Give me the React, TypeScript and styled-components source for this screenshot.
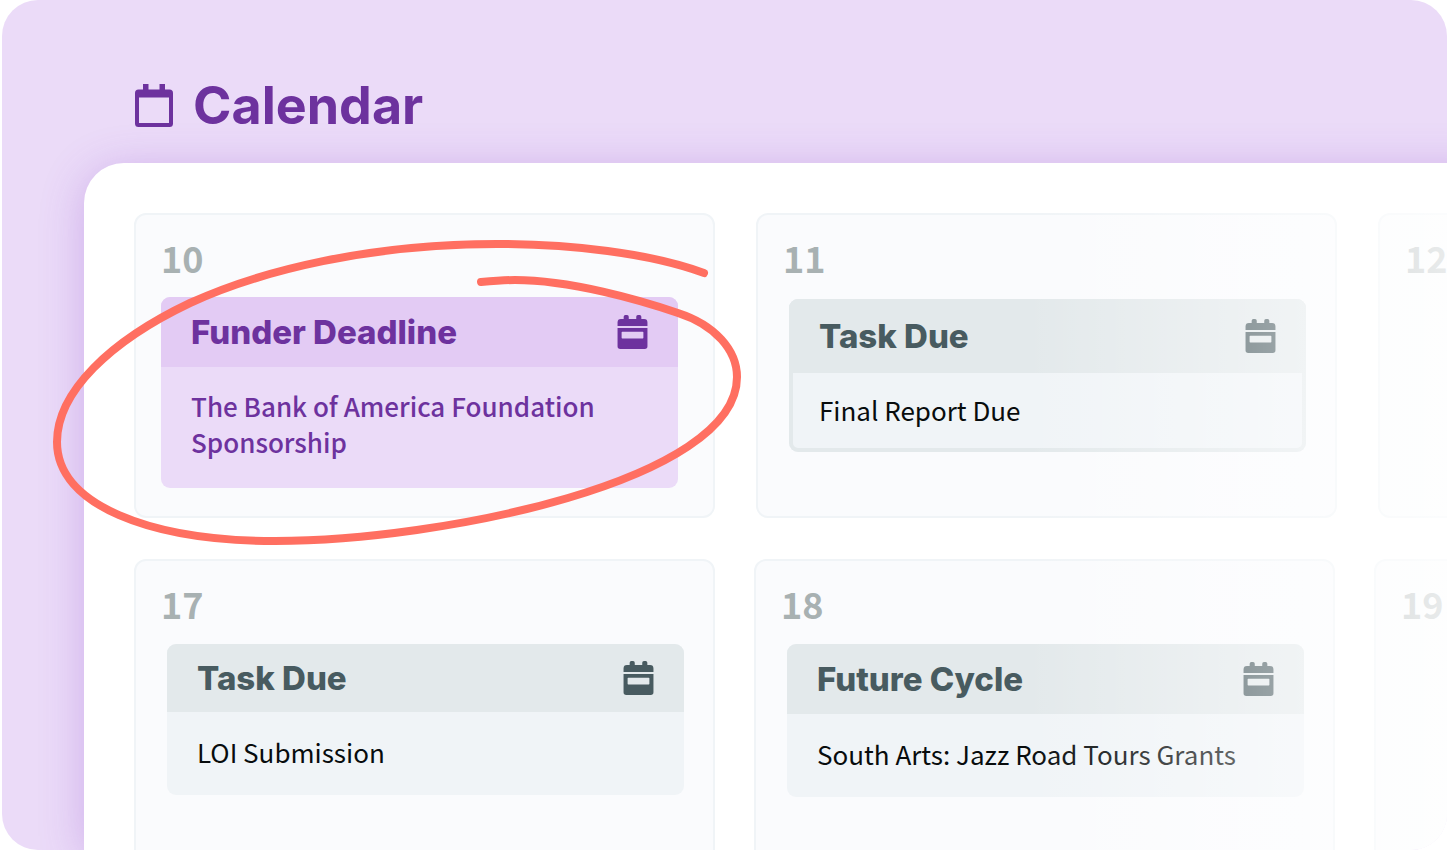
import React from "react";
import styled, { createGlobalStyle } from "styled-components";

const GlobalStyle = createGlobalStyle`
  * { box-sizing: border-box; }
  body {
    margin: 0;
    background: #ffffff;
    font-family: "Noto Sans CJK JP", "Noto Sans", sans-serif;
  }
  h1, h2, h3, p { margin: 0; }
`;

const Frame = styled.main`
  position: relative;
  display: flex;
  flex-direction: column;
  height: 100vh;
  margin: 0 3px 0 2px;
  border-radius: 36px;
  overflow: hidden;
  background: #ebdbf8;
`;

const Header = styled.header`
  display: flex;
  align-items: center;
  gap: 20px;
  flex: none;
  height: 163px;
  padding: 48px 0 0 133px;
  color: #6d329e;
`;

const PageTitle = styled.h1`
  font: 700 52px/64px Inter, sans-serif;
`;

const Panel = styled.section`
  position: relative;
  flex: 1;
  min-height: 0;
  display: flex;
  flex-direction: column;
  gap: 41px;
  margin: 0 -50px 0 82px;
  padding: 50px 50px 0 50px;
  border-top-left-radius: 40px;
  background: #ffffff;
  box-shadow: 0 6px 44px rgba(140, 70, 205, 0.3);

  &::after {
    content: "";
    position: absolute;
    inset: 0 50px 0 0;
    border-top-left-radius: 40px;
    background: linear-gradient(
      to right,
      rgba(255, 255, 255, 0) 69%,
      rgba(255, 255, 255, 0.74) 100%
    );
    pointer-events: none;
  }
`;

const Week = styled.div<{ $gap: number }>`
  display: flex;
  flex: none;
  gap: ${(p) => p.$gap}px;
  overflow: hidden;
`;

const Day = styled.article`
  flex: none;
  width: 44.25%;
  min-height: 305px;
  padding: 20px 29px 28px 25px;
  border: 2px solid #f0f4f7;
  border-radius: 12px;
  background: #fafbfd;
`;

const DayNumber = styled.h2`
  font-size: 36px;
  font-weight: 700;
  line-height: 44px;
  color: #a8b1b2;
`;

type Tone = "purple" | "slate";

const Card = styled.div<{ $tone: Tone; $outlined?: boolean }>`
  margin: ${(p) =>
    p.$tone === "purple" ? "18px 6px 0 0" : p.$outlined ? "20px 0 0 6px" : "19px 0 0 6px"};
  border-radius: 9px;
  overflow: hidden;
  color: ${(p) => (p.$tone === "purple" ? "#6d329e" : "#485b60")};
  background: ${(p) => (p.$tone === "purple" ? "#ebdbf8" : "#f0f4f7")};
  box-shadow: ${(p) => (p.$outlined ? "inset 0 0 0 4px #e3e9eb" : "none")};
`;

const CardHeader = styled.div<{ $tone: Tone; $height: number }>`
  display: flex;
  align-items: center;
  justify-content: space-between;
  height: ${(p) => p.$height}px;
  padding: 0 30px;
  background: ${(p) => (p.$tone === "purple" ? "#e3cbf4" : "#e3e9eb")};
`;

const CardTitle = styled.h3`
  font: 800 33px/40px Inter, sans-serif;
`;

const CardText = styled.p<{ $tone: Tone; $outlined?: boolean }>`
  padding: ${(p) =>
    p.$tone === "purple"
      ? "21px 30px 28px"
      : p.$outlined
        ? "19px 30px 24px"
        : "22px 30px 25px"};
  font-size: 26px;
  font-weight: ${(p) => (p.$tone === "purple" ? 500 : 400)};
  line-height: 36px;
  color: ${(p) => (p.$tone === "purple" ? "#6d329e" : "#080c0d")};
`;

const Annotation = styled.svg`
  position: absolute;
  top: 0;
  left: -2px;
  pointer-events: none;
`;

const CalendarOutline = () => (
  <svg width="38" height="43" viewBox="0 0 38 43" fill="currentColor" aria-hidden="true">
    <path
      fillRule="evenodd"
      d="M8 0h5.500v5.500h11V0H30v5.500h4.500A3.500 3.500 0 0 1 38 9v30.500a3.500 3.500 0 0 1-3.500 3.500h-31A3.500 3.500 0 0 1 0 39.500V9a3.500 3.500 0 0 1 3.500-3.500H8zM4 13.500V39h30V13.500z"
    />
  </svg>
);

const CalendarSolid = () => (
  <svg width="31" height="34" viewBox="0 0 88 100" fill="currentColor" aria-hidden="true">
    <path d="M18 12V5a5 5 0 0 1 5-5h5a5 5 0 0 1 5 5v7h22V5a5 5 0 0 1 5-5h5a5 5 0 0 1 5 5v7h8a10 10 0 0 1 10 10v10H0V22a10 10 0 0 1 10-10z" />
    <path
      fillRule="evenodd"
      d="M0 38h88v54a8 8 0 0 1-8 8H8a8 8 0 0 1-8-8zM14 49a2 2 0 0 0-2 2v16a2 2 0 0 0 2 2h60a2 2 0 0 0 2-2V51a2 2 0 0 0-2-2z"
    />
  </svg>
);

interface Entry {
  title: string;
  text: string;
  tone: Tone;
  headerHeight: number;
  outlined?: boolean;
}

interface DayData {
  day: number;
  entry?: Entry;
}

const weeks: { gap: number; days: DayData[] }[] = [
  {
    gap: 41,
    days: [
      {
        day: 10,
        entry: {
          title: "Funder Deadline",
          text: "The Bank of America Foundation Sponsorship",
          tone: "purple",
          headerHeight: 70,
        },
      },
      {
        day: 11,
        entry: {
          title: "Task Due",
          text: "Final Report Due",
          tone: "slate",
          headerHeight: 74,
          outlined: true,
        },
      },
      { day: 12 },
    ],
  },
  {
    gap: 39,
    days: [
      {
        day: 17,
        entry: { title: "Task Due", text: "LOI Submission", tone: "slate", headerHeight: 68 },
      },
      {
        day: 18,
        entry: {
          title: "Future Cycle",
          text: "South Arts: Jazz Road Tours Grants",
          tone: "slate",
          headerHeight: 70,
        },
      },
      { day: 19 },
    ],
  },
];

const EventCard = ({ entry }: { entry: Entry }) => (
  <Card $tone={entry.tone} $outlined={entry.outlined}>
    <CardHeader $tone={entry.tone} $height={entry.headerHeight}>
      <CardTitle>{entry.title}</CardTitle>
      <CalendarSolid />
    </CardHeader>
    <CardText $tone={entry.tone} $outlined={entry.outlined}>
      {entry.text}
    </CardText>
  </Card>
);

export default function App() {
  return (
    <>
      <GlobalStyle />
      <Frame>
        <Header>
          <CalendarOutline />
          <PageTitle>Calendar</PageTitle>
        </Header>
        <Panel>
          {weeks.map((week) => (
            <Week key={week.gap} $gap={week.gap}>
              {week.days.map(({ day, entry }) => (
                <Day key={day}>
                  <DayNumber>{day}</DayNumber>
                  {entry && <EventCard entry={entry} />}
                </Day>
              ))}
            </Week>
          ))}
        </Panel>
        <Annotation width="800" height="600" viewBox="0 0 800 600" fill="none" aria-hidden="true">
          <path
            d="M704 273C650 253 570 244 497 244C370 244 262 270 190 303C110 341 57 392 57 442C57 505 150 541 275 541C440 541 737 481 737 377C737 350 715 325 678 313C640 300 570 280 515 280C503 280 492 281 481 282"
            stroke="#ff6f61"
            strokeWidth="8"
            strokeLinecap="round"
          />
        </Annotation>
      </Frame>
    </>
  );
}
